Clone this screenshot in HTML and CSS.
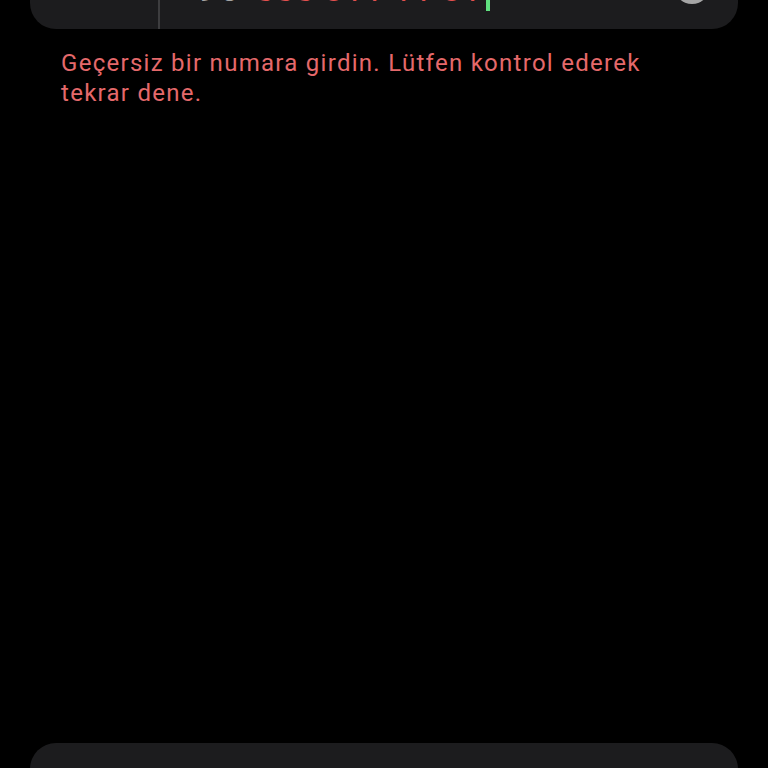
FILE: index.html
```html
<!DOCTYPE html>
<html lang="tr">
<head>
<meta charset="utf-8">
<title>Telefon numarası</title>
<link rel="stylesheet" href="styles.css">
</head>
<body>
<main class="screen">
  <div class="phone-field">
    <div class="country"><span class="country-code">TR</span></div>
    <div class="number">
      <span class="prefix">+90 </span><span class="invalid">555 811 11 81</span><span class="caret"></span>
      <span class="clear"></span>
    </div>
  </div>
  <p class="error">Geçersiz bir numara girdin. Lütfen kontrol ederek tekrar dene.</p>
  <div class="spacer"></div>
  <div class="bottom-button"></div>
</main>
</body>
</html>
```
FILE: styles.css
```css
* { box-sizing: border-box; }
html, body { margin: 0; height: 100%; background: #000; overflow: hidden; }
.screen {
  height: 768px;
  display: flex;
  flex-direction: column;
  padding: 0 30px;
  font-family: Roboto, sans-serif;
}
.phone-field {
  height: 70px;
  margin-top: -41px;
  flex: none;
  display: flex;
  background: #1c1c1e;
  border-radius: 26px;
  color: #a5a5a5;
  font-size: 34px;
  line-height: 40px;
  letter-spacing: 0.8px;
}
.country {
  width: 130px;
  border-right: 2px solid #3d3d3f;
  padding: 10px 0 0 30px;
  font-size: 32px;
}
.number {
  flex: 1;
  display: flex;
  padding: 10px 28px 0 14px;
  white-space: pre;
}
.prefix { letter-spacing: 3.8px; }
.invalid { color: #e2504f; }
.caret {
  width: 4px;
  height: 42px;
  margin-left: 4px;
  background: #5fe07f;
}
.clear {
  width: 36px;
  height: 36px;
  margin: -1px 0 0 auto;
  border-radius: 50%;
  background: #a5a5a5;
}
.error {
  margin: 19px 0 0;
  padding: 0 60px 0 31px;
  color: #e5696b;
  font-size: 24px;
  line-height: 30px;
  letter-spacing: 1.28px;
}
.spacer { flex: 1; }
.bottom-button {
  flex: none;
  height: 70px;
  margin-bottom: -45px;
  background: #1c1c1e;
  border-radius: 26px;
}
```
